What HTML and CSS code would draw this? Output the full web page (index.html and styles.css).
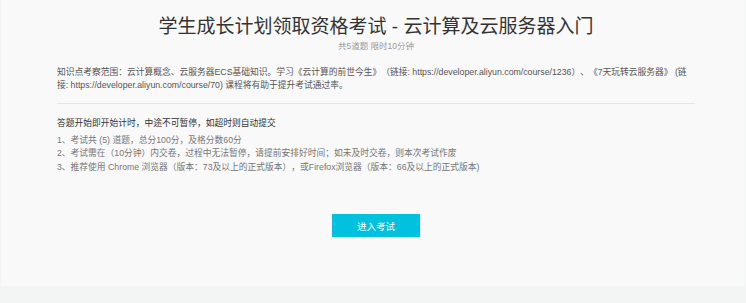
FILE: index.html
```
<!DOCTYPE html>
<html>
<head>
	<meta charset="utf-8">
	<title>学生成长计划领取资格考试</title>
	<link rel="stylesheet" href="styles.css">
</head>
<body>
	<div class="card">
		<div class="exam">
			<h1 class="title">学生成长计划领取资格考试 - 云计算及云服务器入门</h1>
			<div class="sub">共5道题 限时10分钟</div>
			<p class="desc">知识点考察范围：云计算概念、云服务器ECS基础知识。学习《云计算的前世今生》（链接: https://developer.aliyun.com/course/1236）、《7天玩转云服务器》 (链接: https://developer.aliyun.com/course/70) 课程将有助于提升考试通过率。</p>
			<div class="rules">
				<h2>答题开始即开始计时，中途不可暂停，如超时则自动提交</h2>
				<div>1、考试共 (5) 道题，总分100分，及格分数60分</div>
				<div>2、考试需在（10分钟）内交卷，过程中无法暂停，请提前安排好时间；如未及时交卷，则本次考试作废</div>
				<div>3、推荐使用 Chrome 浏览器（版本：73及以上的正式版本），或Firefox浏览器（版本：66及以上的正式版本)</div>
			</div>
			<div class="makecenter">
				<button class="start">进入考试</button>
			</div>
		</div>
	</div>
</body>
</html>
```
FILE: styles.css
```
body,html{
	margin: 0;
	padding: 0;
}
body{
	background-color: #f3f4f4;
	height: 303px;
}
*{
	font-family: "Liberation Sans", "Noto Sans CJK SC", sans-serif;
	text-spacing-trim: space-all;
}
.card{
	margin: 0 1px;
	height: 286px;
	background-color: #f9f9f9;
	overflow: hidden;
}
.exam{
	width: 638px;
	margin: 0 auto;
	padding-left: 6px;
}
.title{
	margin: 0;
	padding-top: 15px;
	text-align: center;
	font-size: 19px;
	font-weight: normal;
	line-height: 24px;
	color: #333;
}
.sub{
	margin-top: 1px;
	text-align: center;
	font-size: 8.5px;
	line-height: 12px;
	color: #999;
}
.desc{
	margin: 14px 0 0;
	padding-bottom: 12px;
	border-bottom: 1px solid #e6e6e6;
	font-size: 8.75px;
	line-height: 12.5px;
	color: #555;
}
.rules{
	padding-top: 13px;
	font-size: 8.75px;
	line-height: 13.5px;
	color: #777;
}
.rules h2{
	margin: 0 0 3px;
	font-size: 8.75px;
	font-weight: normal;
	color: #333;
}
.makecenter{
	display: flex;
	justify-content: center;
	padding-top: 40px;
}
.start{
	width: 88px;
	height: 23px;
	border: none;
	padding: 0;
	background-color: #00c1de;
	color: white;
	font-size: 9.5px;
}
```
